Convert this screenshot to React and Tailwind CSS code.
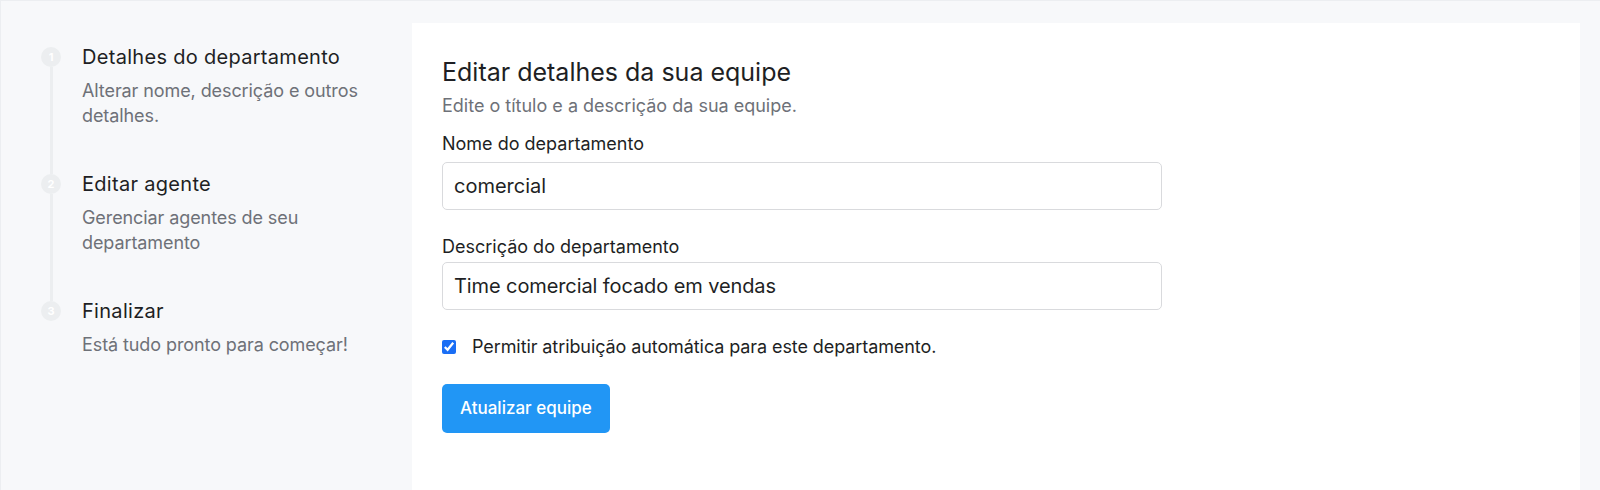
import React from "react";

function Step({ n, title, sub, last }) {
  return (
    <div className="flex gap-[21px]">
      <div className="flex flex-col items-center w-5 shrink-0">
        <div className="w-5 h-5 rounded-full bg-[#eceef0] text-white text-[11px] font-bold flex items-center justify-center leading-none">
          {n}
        </div>
        {!last && <div className="w-[3px] flex-1 bg-[#eceef0]" />}
      </div>
      <div className={"w-[300px] " + (last ? "" : "pb-[46px]")}>
        <div className="text-[20px] leading-[20px] tracking-[0.015em] text-[#1e1f24]">{title}</div>
        <div className="mt-[11px] text-[18px] leading-[25px] tracking-[-0.005em] text-[#6e7178]">{sub}</div>
      </div>
    </div>
  );
}

export default function App() {
  return (
    <div className="min-h-[490px] bg-[#f7f8fa] border-t border-l border-[#eceef1] flex pt-[22px] font-['Inter',sans-serif]">
      <aside className="w-[411px] shrink-0 pl-[40px] pt-[24px]">
        <Step n="1" title="Detalhes do departamento" sub="Alterar nome, descrição e outros detalhes." />
        <Step n="2" title="Editar agente" sub="Gerenciar agentes de seu departamento" />
        <Step n="3" title="Finalizar" sub="Está tudo pronto para começar!" last />
      </aside>
      <main className="flex-1 bg-white mr-[20px] pl-[30px] pt-[33px] pb-10">
        <div className="w-[720px]">
          <h2 className="text-[25px] leading-[32px] text-[#1e1f24]">Editar detalhes da sua equipe</h2>
          <p className="mt-[6px] text-[18px] leading-[24px] text-[#6e7178]">
            Edite o título e a descrição da sua equipe.
          </p>
          <label className="block mt-[14px] text-[18px] leading-[24px] text-[#1e1f24]">Nome do departamento</label>
          <input
            readOnly
            value="comercial"
            className="mt-[6px] block w-full h-[48px] px-[11px] border border-[#d9dadd] rounded-[5px] text-[20px] text-[#1e1f24] outline-none"
          />
          <label className="block mt-[25px] text-[18px] leading-[24px] text-[#1e1f24]">Descrição do departamento</label>
          <input
            readOnly
            value="Time comercial focado em vendas"
            className="mt-[3px] block w-full h-[48px] px-[11px] border border-[#d9dadd] rounded-[5px] text-[20px] tracking-[-0.005em] text-[#1e1f24] outline-none"
          />
          <label className="mt-[25px] flex items-center gap-4 text-[18px] leading-[24px] tracking-[-0.005em] text-[#1e1f24]">
            <input type="checkbox" defaultChecked className="w-[14px] h-[14px] m-0 accent-[#1a6ef5]" />
            Permitir atribuição automática para este departamento.
          </label>
          <button className="mt-[25px] h-[49px] px-[18px] rounded-[5px] bg-[#2196f5] text-white text-[17px] font-medium">
            Atualizar equipe
          </button>
        </div>
      </main>
    </div>
  );
}
